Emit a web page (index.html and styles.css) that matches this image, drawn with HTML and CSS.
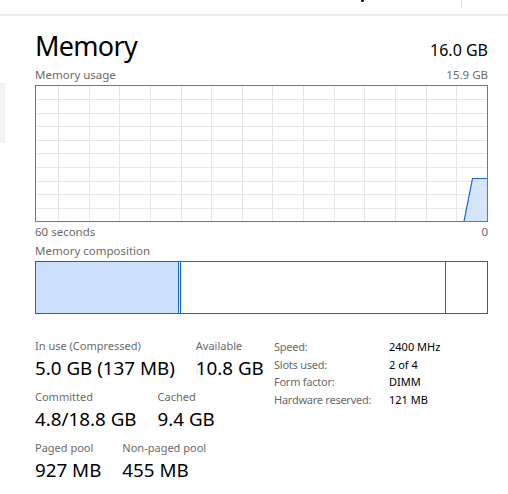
FILE: index.html
```html
<!DOCTYPE html>
<html>
<head>
<meta charset="utf-8">
<link rel="stylesheet" href="styles.css">
</head>
<body>
<div class="topbar">
  <div class="topbar-fill"></div>
  <div class="topbar-mark"></div>
  <div class="topbar-div"></div>
</div>
<div class="layout">
  <div class="sidebar"><div class="sidebar-sel"></div></div>
  <div class="main">
    <div class="title-row">
      <div class="title">Memory</div>
      <div class="total">16.0 GB</div>
    </div>
    <div class="cap-row">
      <span>Memory usage</span>
      <span>15.9 GB</span>
    </div>
    <div class="graph">
      <svg width="451" height="135" viewBox="0 0 451 135" shape-rendering="crispEdges">
        <g stroke="#e6e6e6" stroke-width="1">
          <line x1="22.5" y1="0" x2="22.5" y2="135"/>
          <line x1="53.5" y1="0" x2="53.5" y2="135"/>
          <line x1="83.5" y1="0" x2="83.5" y2="135"/>
          <line x1="114.5" y1="0" x2="114.5" y2="135"/>
          <line x1="145.5" y1="0" x2="145.5" y2="135"/>
          <line x1="175.5" y1="0" x2="175.5" y2="135"/>
          <line x1="206.5" y1="0" x2="206.5" y2="135"/>
          <line x1="236.5" y1="0" x2="236.5" y2="135"/>
          <line x1="267.5" y1="0" x2="267.5" y2="135"/>
          <line x1="298.5" y1="0" x2="298.5" y2="135"/>
          <line x1="328.5" y1="0" x2="328.5" y2="135"/>
          <line x1="359.5" y1="0" x2="359.5" y2="135"/>
          <line x1="390.5" y1="0" x2="390.5" y2="135"/>
          <line x1="420.5" y1="0" x2="420.5" y2="135"/>
          <line x1="0" y1="13.5" x2="451" y2="13.5"/>
          <line x1="0" y1="27.5" x2="451" y2="27.5"/>
          <line x1="0" y1="40.5" x2="451" y2="40.5"/>
          <line x1="0" y1="54.5" x2="451" y2="54.5"/>
          <line x1="0" y1="67.5" x2="451" y2="67.5"/>
          <line x1="0" y1="81.5" x2="451" y2="81.5"/>
          <line x1="0" y1="95.5" x2="451" y2="95.5"/>
          <line x1="0" y1="108.5" x2="451" y2="108.5"/>
          <line x1="0" y1="122.5" x2="451" y2="122.5"/>
        </g>
        <polygon points="428,135 436.5,92.5 451,92.5 451,135" fill="#cce0fb" fill-opacity="0.85" shape-rendering="auto"/>
        <polyline points="428,135.5 436.5,92.5 451,92.5" fill="none" stroke="#1766dc" stroke-width="1.2" shape-rendering="auto"/>
      </svg>
    </div>
    <div class="axis-row">
      <span>60 seconds</span>
      <span>0</span>
    </div>
    <div class="cap-row comp-cap">
      <span>Memory composition</span>
    </div>
    <div class="comp">
      <div class="seg seg-inuse"></div>
      <div class="seg seg-mod"></div>
      <div class="seg seg-standby"></div>
      <div class="seg seg-free"></div>
    </div>
    <div class="stats">
      <div class="stats-left">
        <div class="stat-row">
          <div class="stat"><div class="stat-label">In use (Compressed)</div><div class="stat-value">5.0 GB (137 MB)</div></div>
          <div class="stat"><div class="stat-label">Available</div><div class="stat-value">10.8 GB</div></div>
        </div>
        <div class="stat-row">
          <div class="stat"><div class="stat-label">Committed</div><div class="stat-value">4.8/18.8 GB</div></div>
          <div class="stat"><div class="stat-label">Cached</div><div class="stat-value">9.4 GB</div></div>
        </div>
        <div class="stat-row">
          <div class="stat"><div class="stat-label">Paged pool</div><div class="stat-value">927 MB</div></div>
          <div class="stat"><div class="stat-label">Non-paged pool</div><div class="stat-value">455 MB</div></div>
        </div>
      </div>
      <div class="info">
        <div class="info-label">Speed:</div><div class="info-value">2400 MHz</div>
        <div class="info-label">Slots used:</div><div class="info-value">2 of 4</div>
        <div class="info-label">Form factor:</div><div class="info-value">DIMM</div>
        <div class="info-label">Hardware reserved:</div><div class="info-value">121 MB</div>
      </div>
    </div>
  </div>
</div>
</body>
</html>
```

FILE: styles.css
```css
* { box-sizing: border-box; }
html, body { margin: 0; padding: 0; background: #fff; }
body {
  font-family: "Noto Sans", "Open Sans", sans-serif;
  color: #000;
  width: 508px;
  height: 494px;
  overflow: hidden;
}
.topbar {
  height: 16px;
  border-bottom: 2px solid #ececf0;
  display: flex;
  align-items: flex-start;
  overflow: hidden;
}
.topbar-fill { width: 361px; }
.topbar-mark {
  width: 3px;
  height: 2px;
  background: #222;
  border-radius: 0 0 1px 1px;
}
.topbar-div {
  margin-left: 97px;
  width: 1px;
  height: 8px;
  background: #e4e4e4;
}
.layout { display: flex; }
.sidebar { width: 5px; flex: none; }
.sidebar-sel {
  margin-top: 67px;
  height: 60px;
  background: #f3f3f3;
}
.main {
  width: 453px;
  margin-left: 30px;
}
.title-row {
  display: flex;
  justify-content: space-between;
  align-items: baseline;
  height: 50px;
  padding-top: 12px;
}
.title {
  font-size: 27px;
  line-height: 36px;
  letter-spacing: -0.7px;
}
.total {
  font-size: 16px;
  line-height: 20px;
}
.cap-row {
  display: flex;
  justify-content: space-between;
  font-size: 11.5px;
  line-height: 16px;
  color: #6a6a6a;
  margin-top: 1px;
  height: 18px;
}
.graph {
  width: 453px;
  height: 137px;
  border: 1px solid #777;
}
.graph svg { display: block; }
.axis-row {
  display: flex;
  justify-content: space-between;
  font-size: 11.5px;
  line-height: 16px;
  color: #6a6a6a;
  margin-top: 2px;
}
.comp-cap { margin-top: 3px; }
.comp {
  width: 453px;
  height: 53px;
  border: 1px solid #1662d8;
  display: flex;
}
.seg { height: 100%; }
.seg-inuse { width: 143px; background: #cce0fb; border-right: 1px solid #1662d8; }
.seg-mod { width: 2px; border-right: 1px solid #1662d8; }
.seg-standby { flex: 1; border-right: 1px solid #1662d8; }
.seg-free { width: 41px; }
.stats {
  display: flex;
  align-items: flex-start;
  margin-top: 24px;
}
.stats-left { width: 239px; flex: none; }
.stat-row {
  display: flex;
  gap: 21px;
  margin-bottom: 9px;
}
.stat-label {
  font-size: 11px;
  line-height: 15px;
  color: #6a6a6a;
}
.stat-value {
  font-size: 18.8px;
  line-height: 24px;
  margin-top: 3px;
}
.info {
  display: grid;
  grid-template-columns: 115px auto;
  align-content: start;
  font-size: 11px;
  line-height: 17.7px;
}
.info-label { color: #6a6a6a; letter-spacing: -0.25px; }
.info-value { color: #000; }
```
